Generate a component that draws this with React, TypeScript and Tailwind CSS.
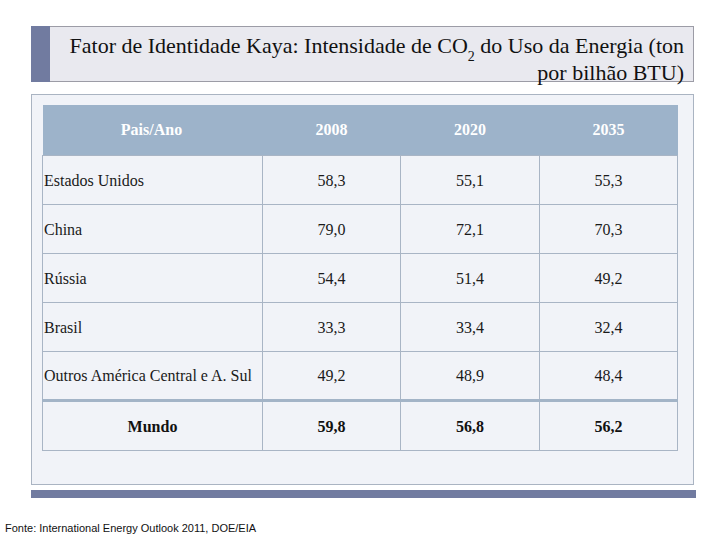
const ROWS = [
  { name: 'Estados Unidos', v: ['58,3', '55,1', '55,3'] },
  { name: 'China', v: ['79,0', '72,1', '70,3'] },
  { name: 'Rússia', v: ['54,4', '51,4', '49,2'] },
  { name: 'Brasil', v: ['33,3', '33,4', '32,4'] },
  { name: 'Outros América Central e A. Sul', v: ['49,2', '48,9', '48,4'] },
];

export default function App() {
  return (
    <div className="relative w-[720px] h-[540px] bg-white overflow-hidden flex flex-col font-['Liberation_Serif','Times_New_Roman',serif]">
      {/* Title */}
      <div className="mt-[26px] ml-[31px] w-[663px] h-[56px] flex">
        <div className="w-[19px] bg-[#717ba0]" />
        <div className="flex-1 bg-[#e9e9ef] border-y border-r border-[#9c9ca6] pt-[6px] pr-[9px] text-right text-[22px] leading-[26px] text-[#111] whitespace-nowrap">
          Fator de Identidade Kaya: Intensidade de CO<sub className="text-[14px] align-[-4px] leading-none">2</sub> do Uso da Energia (ton
          <br />
          por bilhão BTU)
        </div>
      </div>

      {/* Table panel */}
      <div className="mt-[12px] ml-[31px] w-[663px] h-[391px] bg-[#f1f3f8] border border-[#aab4c2] pt-[10px] pl-[10px]">
        <table className="border-collapse table-fixed w-[635px] text-[16px] text-[#1a1a1a]">
          <colgroup>
            <col className="w-[220px]" />
            <col className="w-[138px]" />
            <col className="w-[139px]" />
            <col className="w-[138px]" />
          </colgroup>
          <thead>
            <tr className="h-[50px] bg-[#9db3ca] text-white">
              <th className="font-bold text-center pr-[2px] pt-[1px]">Pais/Ano</th>
              <th className="font-bold text-center pt-[1px]">2008</th>
              <th className="font-bold text-center pt-[1px]">2020</th>
              <th className="font-bold text-center pt-[1px]">2035</th>
            </tr>
          </thead>
          <tbody>
            {ROWS.map((r) => (
              <tr key={r.name} className="h-[49px]">
                <td className="border border-[#a9b5c5] pl-[1px] pt-[2px] text-left whitespace-nowrap">{r.name}</td>
                {r.v.map((x, i) => (
                  <td key={i} className="border border-[#a9b5c5] pt-[2px] text-center">{x}</td>
                ))}
              </tr>
            ))}
            <tr className="h-[50px] font-bold text-[#111]">
              <td className="border border-[#a9b5c5] border-t-[3px] border-t-[#a3b4c7] pt-[2px] text-center">Mundo</td>
              <td className="border border-[#a9b5c5] border-t-[3px] border-t-[#a3b4c7] pt-[2px] text-center">59,8</td>
              <td className="border border-[#a9b5c5] border-t-[3px] border-t-[#a3b4c7] pt-[2px] text-center">56,8</td>
              <td className="border border-[#a9b5c5] border-t-[3px] border-t-[#a3b4c7] pt-[2px] text-center">56,2</td>
            </tr>
          </tbody>
        </table>
      </div>

      {/* Bottom bar */}
      <div className="mt-[5px] ml-[31px] w-[665px] h-[8px] bg-[#717ba0]" />

      <div className="mt-[23px] ml-[5px] text-[11px] leading-[14px] text-[#111] font-['Liberation_Sans',Arial,sans-serif]">
        Fonte: International Energy Outlook 2011, DOE/EIA
      </div>
    </div>
  );
}
